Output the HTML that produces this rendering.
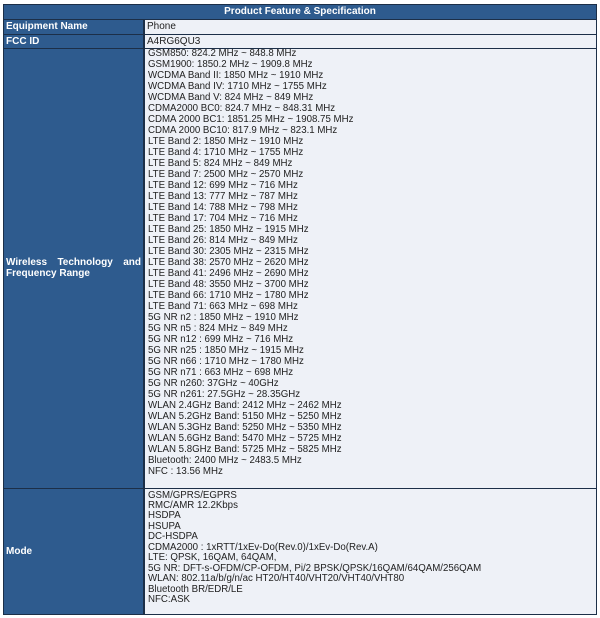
<!DOCTYPE html><html><head><style>
body{margin:0;background:#fff;width:600px;height:618px;position:relative;font-family:"Liberation Sans",sans-serif;overflow:hidden}
.b{position:absolute;box-sizing:border-box}
.lab{background:#2e5b8e;color:#fff;font-weight:bold;font-size:10px}
.val{background:#eef1f7;color:#222;font-size:9.7px}
.ln{position:absolute;left:3px;white-space:nowrap;line-height:11px}
</style></head><body>
<div class="b" style="left:3px;top:4px;width:594px;height:611px;background:#1c2f48"></div>
<div class="b lab" style="left:4px;top:5px;width:592px;height:14px;text-align:center;line-height:14px">Product Feature &amp; Specification</div>
<div class="b lab" style="left:4px;top:20px;width:139px;height:14px;line-height:14px;padding-left:2px">Equipment Name</div>
<div class="b val" style="left:145px;top:20px;width:451px;height:14px;line-height:14px;padding-left:2px;font-size:10px">Phone</div>
<div class="b lab" style="left:4px;top:35px;width:139px;height:13px;line-height:13px;padding-left:2px">FCC ID</div>
<div class="b val" style="left:145px;top:35px;width:451px;height:13px;line-height:13px;padding-left:2px;font-size:10px">A4RG6QU3</div>
<div class="b lab" style="left:4px;top:49px;width:139px;height:439px;line-height:11px">
<div style="position:absolute;left:2px;right:2px;top:208px;display:flex;justify-content:space-between;white-space:nowrap"><span>Wireless</span><span>Technology</span><span>and</span></div>
<div style="position:absolute;left:2px;top:219px;white-space:nowrap">Frequency Range</div>
</div>
<div class="b val" style="left:145px;top:49px;width:451px;height:439px" id="w"></div>
<div class="b lab" style="left:4px;top:489px;width:139px;height:125px;line-height:125px;padding-left:2px">Mode</div>
<div class="b val" style="left:145px;top:489px;width:451px;height:125px" id="m"></div>
<script>
var w=["GSM850: 824.2 MHz ~ 848.8 MHz","GSM1900: 1850.2 MHz ~ 1909.8 MHz","WCDMA Band II: 1850 MHz ~ 1910 MHz","WCDMA Band IV: 1710 MHz ~ 1755 MHz","WCDMA Band V: 824 MHz ~ 849 MHz","CDMA2000 BC0: 824.7 MHz ~ 848.31 MHz","CDMA 2000 BC1: 1851.25 MHz ~ 1908.75 MHz","CDMA 2000 BC10: 817.9 MHz ~ 823.1 MHz","LTE Band 2: 1850 MHz ~ 1910 MHz","LTE Band 4: 1710 MHz ~ 1755 MHz","LTE Band 5: 824 MHz ~ 849 MHz","LTE Band 7: 2500 MHz ~ 2570 MHz","LTE Band 12: 699 MHz ~ 716 MHz","LTE Band 13: 777 MHz ~ 787 MHz","LTE Band 14: 788 MHz ~ 798 MHz","LTE Band 17: 704 MHz ~ 716 MHz","LTE Band 25: 1850 MHz ~ 1915 MHz","LTE Band 26: 814 MHz ~ 849 MHz","LTE Band 30: 2305 MHz ~ 2315 MHz","LTE Band 38: 2570 MHz ~ 2620 MHz","LTE Band 41: 2496 MHz ~ 2690 MHz","LTE Band 48: 3550 MHz ~ 3700 MHz","LTE Band 66: 1710 MHz ~ 1780 MHz","LTE Band 71: 663 MHz ~ 698 MHz","5G NR n2 : 1850 MHz ~ 1910 MHz","5G NR n5 : 824 MHz ~ 849 MHz","5G NR n12 : 699 MHz ~ 716 MHz","5G NR n25 : 1850 MHz ~ 1915 MHz","5G NR n66 : 1710 MHz ~ 1780 MHz","5G NR n71 : 663 MHz ~ 698 MHz","5G NR n260: 37GHz ~ 40GHz","5G NR n261: 27.5GHz ~ 28.35GHz","WLAN 2.4GHz Band: 2412 MHz ~ 2462 MHz","WLAN 5.2GHz Band: 5150 MHz ~ 5250 MHz","WLAN 5.3GHz Band: 5250 MHz ~ 5350 MHz","WLAN 5.6GHz Band: 5470 MHz ~ 5725 MHz","WLAN 5.8GHz Band: 5725 MHz ~ 5825 MHz","Bluetooth: 2400 MHz ~ 2483.5 MHz","NFC : 13.56 MHz"];
var m=["GSM/GPRS/EGPRS","RMC/AMR 12.2Kbps","HSDPA","HSUPA","DC-HSDPA","CDMA2000 : 1xRTT/1xEv-Do(Rev.0)/1xEv-Do(Rev.A)","LTE: QPSK, 16QAM, 64QAM,","5G NR: DFT-s-OFDM/CP-OFDM, Pi/2 BPSK/QPSK/16QAM/64QAM/256QAM","WLAN: 802.11a/b/g/n/ac HT20/HT40/VHT20/VHT40/VHT80","Bluetooth BR/EDR/LE","NFC:ASK"];
function f(id,a,t0,st){var e=document.getElementById(id),h="";a.forEach(function(s,i){h+='<div class="ln" style="top:'+(t0+i*st).toFixed(1)+'px">'+s+'</div>'});e.innerHTML=h}
f("w",w,-1.5,11.0);f("m",m,0.5,10.45);
</script>
</body></html>
